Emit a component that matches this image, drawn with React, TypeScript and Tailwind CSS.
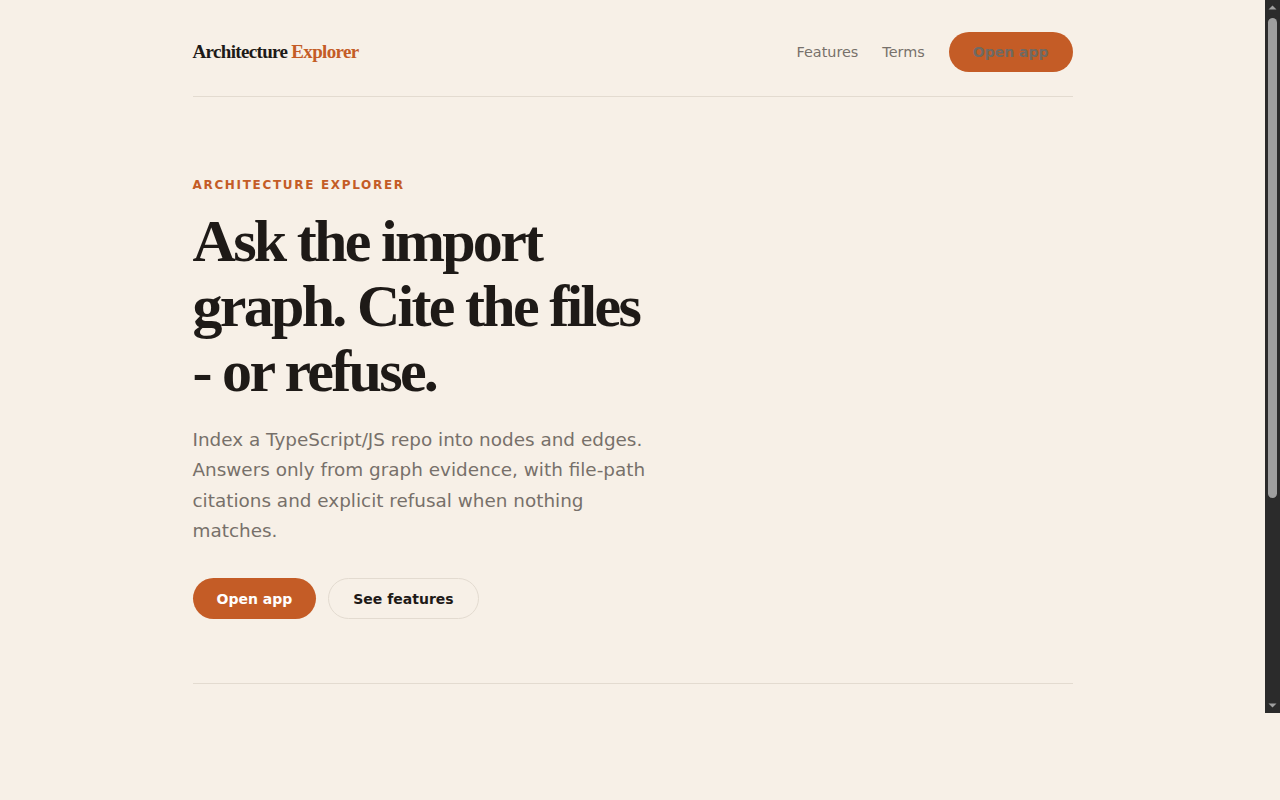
function Scrollbar() {
  // static dark scrollbar rail shown beside the page viewport
  return (
    <div className="flex w-[15px] shrink-0 flex-col items-center bg-[#2b2b2b]">
      <svg width="15" height="15" viewBox="0 0 15 15" className="shrink-0">
        <path d="M3.5 9.5 L7.5 5.5 L11.5 9.5 Z" fill="#9f9f9f" />
      </svg>
      <div className="mt-[3px] h-[480px] w-[9px] rounded-full bg-[#9f9f9f]" />
      <div className="flex-1" />
      <svg width="15" height="15" viewBox="0 0 15 15" className="shrink-0">
        <path d="M3.5 5.5 L11.5 5.5 L7.5 9.5 Z" fill="#9f9f9f" />
      </svg>
    </div>
  );
}

export default function App() {
  return (
    <div className="min-h-screen bg-[#f7f0e7] font-['DejaVu_Sans',sans-serif]">
      <div className="flex h-[713px]">
        <div className="min-w-0 flex-1 overflow-hidden">
          <div className="mx-auto w-[880px]">
            {/* Top bar */}
            <header className="flex items-center justify-between border-b border-[#e3dbd0] pt-8 pb-6">
              <a href="#" className="font-['Liberation_Serif',serif] text-[19px] font-bold tracking-[-0.035em] text-[#1e1a17]">
                Architecture <span className="text-[#c45c26]">Explorer</span>
              </a>
              <nav className="flex items-center gap-6 text-[14.4px] leading-5 text-[#77716b]">
                <a href="#features">Features</a>
                <a href="#terms">Terms</a>
                <a
                  href="#app"
                  className="flex h-10 items-center rounded-full bg-[#c45c26] px-6 text-sm font-bold text-[#6f6a63]"
                >
                  Open app
                </a>
              </nav>
            </header>

            {/* Hero */}
            <section className="border-b border-[#e3dbd0] pt-20 pb-16">
              <p className="text-xs leading-4 font-bold tracking-[0.14em] text-[#c45c26]">
                ARCHITECTURE EXPLORER
              </p>
              <h1 className="mt-4 max-w-[460px] font-['Liberation_Serif',serif] text-[60px] leading-[65px] font-bold tracking-[-0.045em] text-[#1e1a17]">
                Ask the import graph. Cite the files - or refuse.
              </h1>
              <p className="mt-[21px] max-w-[460px] text-[18.4px] leading-[30.3px] text-[#77706a]">
                Index a TypeScript/JS repo into nodes and edges. Answers only from graph evidence, with file-path citations and explicit refusal when nothing matches.
              </p>
              <div className="mt-8 flex items-center gap-3">
                <a
                  href="#app"
                  className="flex h-[41px] items-center rounded-full bg-[#c45c26] px-6 text-sm font-bold text-white"
                >
                  Open app
                </a>
                <a
                  href="#features"
                  className="flex h-[41px] items-center rounded-full border border-[#e3dbd0] px-6 text-sm font-bold text-[#1e1a17]"
                >
                  See features
                </a>
              </div>
            </section>
          </div>
        </div>
        <Scrollbar />
      </div>
    </div>
  );
}
